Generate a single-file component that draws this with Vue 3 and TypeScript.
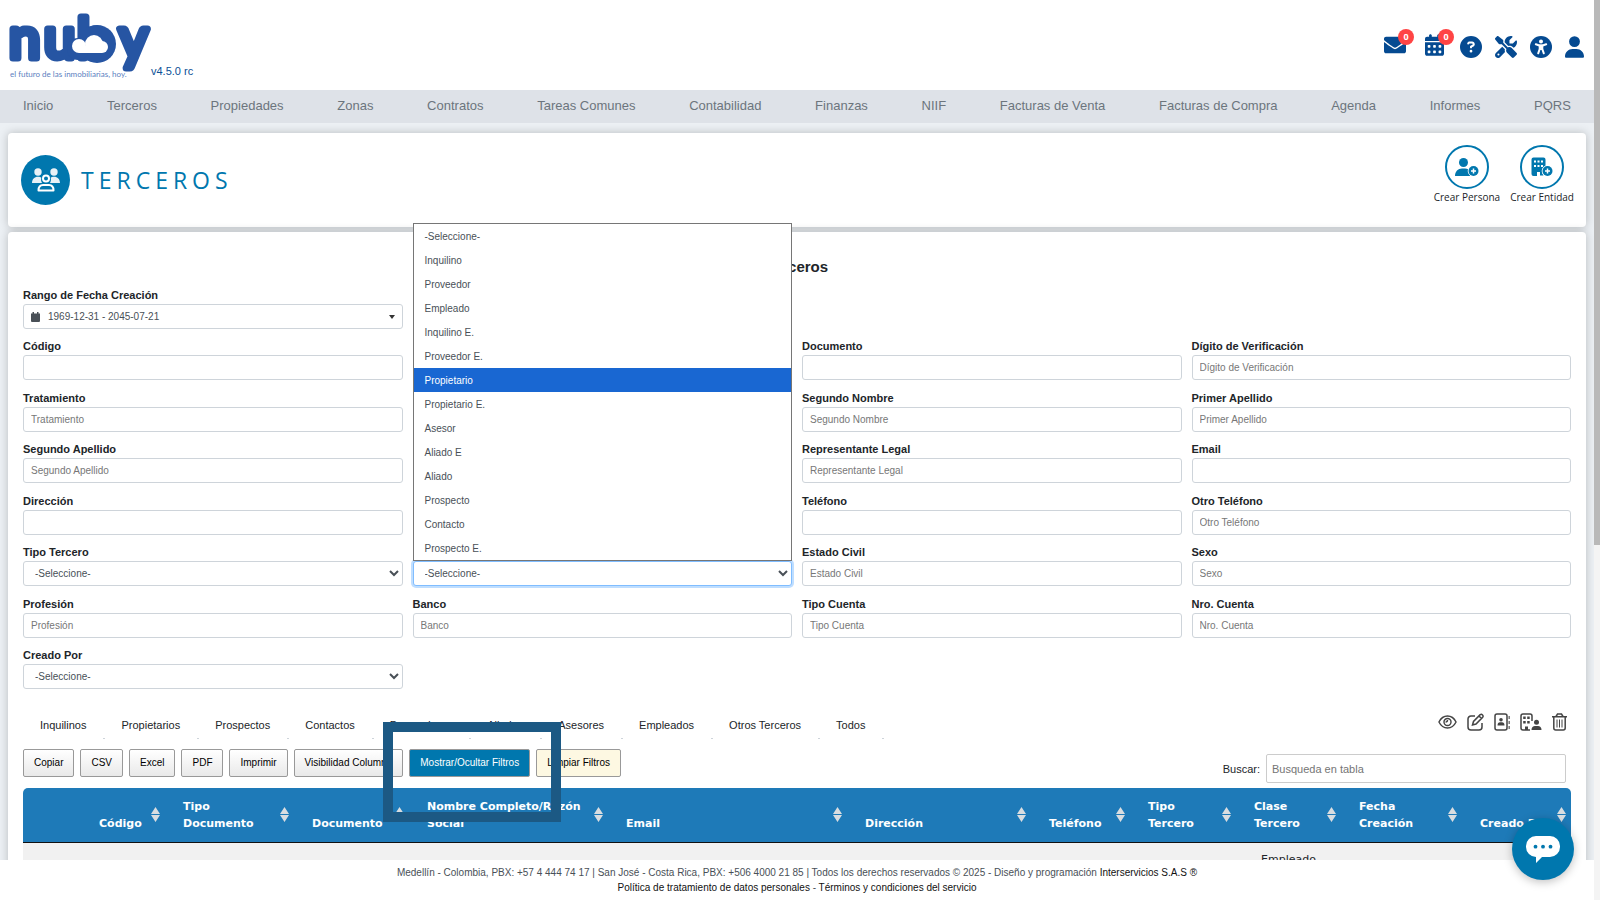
<script setup lang="ts">
interface Field {
  id: string
  label: string
  kind: 'text' | 'select' | 'range' | 'open'
  placeholder?: string
}

interface Column {
  key: string
  lines: string[]
  width?: number
}

const menu: string[] = [
  'Inicio', 'Terceros', 'Propiedades', 'Zonas', 'Contratos', 'Tareas Comunes', 'Contabilidad',
  'Finanzas', 'NIIF', 'Facturas de Venta', 'Facturas de Compra', 'Agenda', 'Informes', 'PQRS',
]

const text = (id: string, label: string, placeholder = label): Field => ({ id, label, kind: 'text', placeholder })
const select = (id: string, label: string): Field => ({ id, label, kind: 'select' })

const rows: (Field | null)[][] = [
  [{ id: 'rango', label: 'Rango de Fecha Creación', kind: 'range' }],
  [text('codigo', 'Código', ''), null, text('documento', 'Documento', ''), text('dv', 'Dígito de Verificación')],
  [text('tratamiento', 'Tratamiento'), null, text('nombre2', 'Segundo Nombre'), text('apellido1', 'Primer Apellido')],
  [text('apellido2', 'Segundo Apellido'), null, text('representante', 'Representante Legal'), text('email', 'Email', '')],
  [text('direccion', 'Dirección', ''), null, text('telefono', 'Teléfono', ''), text('telefono2', 'Otro Teléfono')],
  [select('tipo', 'Tipo Tercero'), { id: 'clase', label: 'Clase Tercero', kind: 'open' }, text('estado', 'Estado Civil'), text('sexo', 'Sexo')],
  [text('profesion', 'Profesión'), text('banco', 'Banco'), text('cuenta', 'Tipo Cuenta'), text('nrocuenta', 'Nro. Cuenta')],
  [select('creado', 'Creado Por')],
]

const options: string[] = [
  '-Seleccione-', 'Inquilino', 'Proveedor', 'Empleado', 'Inquilino E.', 'Proveedor E.', 'Propietario',
  'Propietario E.', 'Asesor', 'Aliado E', 'Aliado', 'Prospecto', 'Contacto', 'Prospecto E.',
]
const active = 'Propietario'

const tabs: string[] = [
  'Inquilinos', 'Propietarios', 'Prospectos', 'Contactos', 'Proveedores', 'Aliados', 'Asesores',
  'Empleados', 'Otros Terceros', 'Todos',
]

const exportsList: string[] = ['Copiar', 'CSV', 'Excel', 'PDF', 'Imprimir', 'Visibilidad Columna']

const columns: Column[] = [
  { key: 'codigo', lines: ['Código'], width: 84 },
  { key: 'tipodoc', lines: ['Tipo', 'Documento'], width: 129 },
  { key: 'doc', lines: ['Documento'], width: 115 },
  { key: 'nombre', lines: ['Nombre Completo/Razón', 'Social'], width: 199 },
  { key: 'email', lines: ['Email'] },
  { key: 'dir', lines: ['Dirección'], width: 184 },
  { key: 'tel', lines: ['Teléfono'], width: 99 },
  { key: 'tipo', lines: ['Tipo', 'Tercero'], width: 106 },
  { key: 'clase', lines: ['Clase', 'Tercero'], width: 105 },
  { key: 'fecha', lines: ['Fecha', 'Creación'], width: 121 },
  { key: 'creado', lines: ['Creado Por'], width: 109 },
]
</script>

<template>
  <div class="screen">
    <div class="page">
      <header class="top">
        <a class="brand" href="#" aria-label="nuby">
          <svg class="logo" width="146" height="84" viewBox="0 0 146 84">
            <text class="word" x="2 37 70 112" y="58">nuby</text>
            <g fill="#2655a3">
              <circle cx="90" cy="44" r="19" />
              <circle cx="71" cy="49" r="11" />
            </g>
            <g class="cloud">
              <circle cx="72" cy="46" r="7" />
              <circle cx="87" cy="44" r="9" />
              <circle cx="95" cy="47" r="6" />
              <rect x="72" y="46" width="23" height="7" />
            </g>
            <text class="tag" x="3" y="77">el futuro de las inmobiliarias, hoy.</text>
          </svg>
          <span class="version">v4.5.0 rc</span>
        </a>
        <div class="tools">
          <button class="tool mail" aria-label="Correo">
            <svg width="22" height="22" viewBox="0 0 512 512"><path d="M502.300 190.800c3.900-3.100 9.700-.2 9.700 4.700V400c0 26.500-21.500 48-48 48H48c-26.500 0-48-21.500-48-48V195.600c0-5 5.700-7.800 9.700-4.700 22.400 17.400 52.100 39.500 154.100 113.600 21.100 15.400 56.700 47.800 92.200 47.600 35.700.3 72-32.800 92.300-47.600 102-74.100 131.600-96.300 154-113.700zM256 320c23.200.4 56.600-29.200 73.400-41.400 132.700-96.300 142.800-104.700 173.400-128.700 5.800-4.500 9.200-11.500 9.200-18.900v-19c0-26.500-21.500-48-48-48H48c-26.500 0-48 21.500-48 48v19c0 7.400 3.400 14.300 9.200 18.900 30.600 23.900 40.700 32.400 173.400 128.700 16.800 12.200 50.200 41.800 73.400 41.400z" /></svg>
            <span class="badge">0</span>
          </button>
          <button class="tool cal" aria-label="Calendario">
            <svg width="19" height="22" viewBox="0 0 448 512"><path d="M128 0c17.700 0 32 14.300 32 32V64H288V32c0-17.700 14.300-32 32-32s32 14.300 32 32V64h48c26.500 0 48 21.500 48 48v48H0V112C0 85.500 21.500 64 48 64H96V32c0-17.700 14.300-32 32-32zM0 192H448V464c0 26.500-21.500 48-48 48H48c-26.500 0-48-21.500-48-48V192zm64 80v32c0 8.800 7.200 16 16 16h32c8.800 0 16-7.200 16-16V272c0-8.800-7.200-16-16-16H80c-8.800 0-16 7.200-16 16zm128 0v32c0 8.800 7.200 16 16 16h32c8.800 0 16-7.200 16-16V272c0-8.800-7.200-16-16-16H208c-8.800 0-16 7.200-16 16zm144-16c-8.800 0-16 7.200-16 16v32c0 8.800 7.200 16 16 16h32c8.800 0 16-7.200 16-16V272c0-8.800-7.200-16-16-16H336zM64 400v32c0 8.800 7.200 16 16 16h32c8.800 0 16-7.200 16-16V400c0-8.800-7.200-16-16-16H80c-8.800 0-16 7.200-16 16zm144-16c-8.800 0-16 7.200-16 16v32c0 8.800 7.200 16 16 16h32c8.800 0 16-7.200 16-16V400c0-8.800-7.200-16-16-16H208zm112 16v32c0 8.800 7.200 16 16 16h32c8.800 0 16-7.200 16-16V400c0-8.800-7.200-16-16-16H336c-8.800 0-16 7.200-16 16z" /></svg>
            <span class="badge">0</span>
          </button>
          <button class="tool" aria-label="Ayuda">
            <svg width="22" height="22" viewBox="0 0 512 512"><path d="M256 512A256 256 0 1 0 256 0a256 256 0 1 0 0 512zM169.800 165.300c7.900-22.300 29.100-37.300 52.800-37.300h58.300c34.900 0 63.100 28.300 63.100 63.100c0 22.600-12.100 43.500-31.700 54.800L280 264.400c-.2 13-10.900 23.600-24 23.600c-13.300 0-24-10.700-24-24V250.500c0-8.600 4.600-16.500 12.100-20.800l44.300-25.400c4.700-2.700 7.600-7.700 7.600-13.100c0-8.400-6.800-15.100-15.100-15.100H222.600c-3.400 0-6.400 2.100-7.500 5.300l-.4 1.200c-4.400 12.500-18.200 19-30.600 14.600s-19-18.200-14.600-30.600l.4-1.200zM224 352a32 32 0 1 1 64 0 32 32 0 1 1-64 0z" /></svg>
          </button>
          <button class="tool" aria-label="Configuración">
            <svg width="22" height="22" viewBox="0 0 512 512"><path d="M78.600 5C69.100-2.400 55.600-1.500 47 7L7 47c-8.500 8.500-9.400 22-2.100 31.600l80 104c4.500 5.900 11.600 9.400 19 9.400h54.100l109 109c-14.700 29-10 65.400 14.300 89.600l112 112c12.500 12.500 32.800 12.500 45.300 0l64-64c12.500-12.500 12.500-32.800 0-45.300l-112-112c-24.200-24.200-60.600-29-89.600-14.300l-109-109V104c0-7.500-3.500-14.500-9.400-19L78.600 5zM19.900 396.100C7.200 408.800 0 426.100 0 444.100C0 481.600 30.400 512 67.900 512c18 0 35.300-7.200 48-19.900L233.700 374.300c-7.800-20.900-9-43.600-3.600-65.100l-61.700-61.700L19.900 396.100zM512 144c0-10.500-1.100-20.700-3.200-30.500c-2.400-11.200-16.100-14.100-24.200-6l-63.900 63.900c-3 3-7.100 4.700-11.300 4.700H352c-8.800 0-16-7.200-16-16V102.600c0-4.200 1.700-8.300 4.700-11.300l63.900-63.900c8.100-8.100 5.200-21.800-6-24.200C388.700 1.100 378.500 0 368 0C288.500 0 224 64.500 224 144l0 .8 85.300 85.300c36-9.100 75.800 .5 104 28.700L429 274.500c49-23 83-72.800 83-130.500zM56 432a24 24 0 1 1 48 0 24 24 0 1 1-48 0z" /></svg>
          </button>
          <button class="tool" aria-label="Accesibilidad">
            <svg width="22" height="22" viewBox="0 0 22 22"><circle cx="11" cy="11" r="11" /><g fill="#fff" stroke="#fff" stroke-width="2" stroke-linecap="round" stroke-linejoin="round"><circle cx="11" cy="5.500" r="1" /><path d="M5.800 8.300l3.600 1.200h3.200l3.600-1.200" fill="none" /><path d="M9.700 9.500v3.500l-1.500 4.300M12.300 9.500v3.500l1.500 4.300M11 9.500v3.500" fill="none" /></g></svg>
          </button>
          <button class="tool" aria-label="Usuario">
            <svg width="19" height="22" viewBox="0 0 448 512"><path d="M224 256A128 128 0 1 0 224 0a128 128 0 1 0 0 256zm-45.700 48C79.800 304 0 383.800 0 482.300C0 498.700 13.300 512 29.700 512H418.300c16.400 0 29.700-13.300 29.700-29.700C448 383.800 368.200 304 269.700 304H178.300z" /></svg>
          </button>
        </div>
      </header>

      <nav class="menu">
        <a v-for="item in menu" :key="item" href="#">{{ item }}</a>
      </nav>

      <main class="main">
        <section class="card heading">
          <div class="title">
            <svg width="49" height="50" viewBox="0 0 49 50">
              <ellipse cx="24.500" cy="25" rx="24.500" ry="25" fill="#0077ae" />
              <g fill="#e8f1f6">
                <circle cx="17" cy="17" r="3.700" /><circle cx="33" cy="17" r="3.700" />
                <path d="M11 28c0-4 2.500-6.300 6-6.300 1.500 0 2.500.3 3.300 1-.5 2-.2 3.700.7 5.300z" />
                <path d="M39 28c0-4-2.500-6.300-6-6.300-1.500 0-2.500.3-3.300 1 .5 2 .2 3.700-.7 5.300z" />
              </g>
              <circle cx="25" cy="23.500" r="3" fill="none" stroke="#fff" stroke-width="2" />
              <path d="M17.500 35.500c0-4 2-5.500 4.500-5.500h6c2.500 0 4.500 1.500 4.500 5.500z" fill="none" stroke="#fff" stroke-width="2" stroke-linejoin="round" />
            </svg>
            <h1>TERCEROS</h1>
          </div>
          <div class="creates">
            <button class="create">
              <span class="ring">
                <svg width="24" height="20" viewBox="0 0 24 20"><circle cx="8.500" cy="5.500" r="4.500" /><path d="M0 19c0-4.500 3-7.500 7-7.500h3c2.500 0 4 1 5 2.500a6 6 0 0 0 .5 5z" /><circle cx="18.500" cy="14" r="5.800" fill="#fff" /><circle cx="18.500" cy="14" r="5" /><path d="M18.500 11.500v5M16 14h5" stroke="#fff" stroke-width="1.500" /></svg>
              </span>
              <span>Crear Persona</span>
            </button>
            <button class="create">
              <span class="ring">
                <svg width="24" height="20" viewBox="0 0 24 20"><path d="M1.500 2.500A2 2 0 0 1 3.500.5h10a2 2 0 0 1 2 2V9a6 6 0 0 0-2 9.500H10V15H7v4H3.500a2 2 0 0 1-2-2z" /><path d="M4 3.500h2v2H4zM7.500 3.500h2v2h-2zM11 3.500h2v2h-2zM4 8h2v2H4zM7.500 8h2v2h-2zM11 8h2v2h-2z" fill="#fff" /><circle cx="17.500" cy="14" r="5.800" fill="#fff" /><circle cx="17.500" cy="14" r="5" /><path d="M17.500 11.500v5M15 14h5" stroke="#fff" stroke-width="1.500" /></svg>
              </span>
              <span>Crear Entidad</span>
            </button>
          </div>
        </section>

        <section class="card content">
          <h2>Terceros</h2>

          <form class="filters" @submit.prevent>
            <div v-for="(row, r) in rows" :key="r" class="row">
              <div v-for="(f, c) in row" :key="c" class="field">
                <template v-if="f && f.kind === 'open'">
                  <div class="combo">
                    <select :id="f.id" class="control focus" :aria-label="f.label">
                      <option>-Seleccione-</option>
                    </select>
                    <ul class="list" role="listbox" :aria-label="f.label">
                      <li v-for="o in options" :key="o" role="option" :aria-selected="o === active" :class="{ on: o === active }">{{ o }}</li>
                    </ul>
                  </div>
                </template>
                <template v-else-if="f">
                  <label :for="f.id">{{ f.label }}</label>
                  <button v-if="f.kind === 'range'" :id="f.id" type="button" class="control range">
                    <svg width="9" height="10" viewBox="0 0 9 10"><path d="M1.500 0h1.500v1.500h3V0h1.500v1.500H9v1.500H0V1.500h1.500zM0 3h9V9a1 1 0 0 1-1 1H1a1 1 0 0 1-1-1z" /></svg>
                    <span>1969-12-31 - 2045-07-21</span>
                    <i class="caret"></i>
                  </button>
                  <select v-else-if="f.kind === 'select'" :id="f.id" class="control">
                    <option>-Seleccione-</option>
                  </select>
                  <input v-else :id="f.id" type="text" class="control" :placeholder="f.placeholder" />
                </template>
              </div>
            </div>
          </form>

          <div class="tabbar">
            <div class="tabs" role="tablist">
              <button v-for="t in tabs" :key="t" role="tab" class="tab">{{ t }}</button>
            </div>
            <div class="actions">
              <button aria-label="Ver"><svg width="19" height="18" viewBox="0 0 20 18" fill="none" stroke="#444" stroke-width="1.500"><path d="M1 9c2-4 5-6.300 9-6.300S17 5 19 9c-2 4-5 6.300-9 6.300S3 13 1 9z" /><circle cx="10" cy="9" r="3.700" /><path d="M10 7a2 2 0 0 1-2 2" /></svg></button>
              <button aria-label="Editar"><svg width="17" height="18" viewBox="0 0 17 18" fill="none" stroke="#444" stroke-width="1.500"><path d="M8 3H4a3 3 0 0 0-3 3v8a3 3 0 0 0 3 3h8a3 3 0 0 0 3-3v-4" /><path d="M13.200 1.700a1.800 1.800 0 0 1 2.500 2.500L9 11l-3.500 1 1-3.500zM12 3l2.500 2.500" /></svg></button>
              <button aria-label="Contacto"><svg width="16" height="18" viewBox="0 0 16 18"><rect x="1" y="1" width="12" height="16" rx="2" fill="none" stroke="#444" stroke-width="1.500" /><circle cx="7" cy="6.700" r="1.800" fill="#444" /><path d="M3.500 12.500c0-2 1-3.200 2.500-3.200h2c1.500 0 2.500 1.200 2.500 3.200z" fill="#444" /><path d="M15.200 3v3M15.200 8v3M15.200 13v3" stroke="#777" stroke-width="1.500" /></svg></button>
              <button aria-label="Entidad"><svg width="22" height="18" viewBox="0 0 22 18"><path d="M10 17H3a2 2 0 0 1-2-2V3a2 2 0 0 1 2-2h7a2 2 0 0 1 2 2v5" fill="none" stroke="#444" stroke-width="1.500" /><path d="M3.200 3.500h2.500V6H3.200zM7.200 3.500h2.500V6H7.200zM3.200 8h2.500v2.500H3.200zM7.200 8h2.500v2.500H7.200zM5 17v-3.500h3V17z" fill="#444" /><circle cx="16.500" cy="9.300" r="2.500" fill="#444" /><path d="M11.500 17c0-2.700 1.500-4 3.500-4h3c2 0 3.500 1.300 3.500 4z" fill="#444" /></svg></button>
              <button aria-label="Eliminar"><svg width="15" height="18" viewBox="0 0 15 18" fill="none" stroke="#444" stroke-width="1.500"><path d="M0 3.700h15M4 3.500L5.500 1h4L11 3.500M1.800 4v11a2 2 0 0 0 2 2h7.400a2 2 0 0 0 2-2V4" /><path d="M5 6.500v8M7.500 6.500v8M10 6.500v8" stroke-width="1" /></svg></button>
            </div>
          </div>

          <div class="toolbar">
            <div class="buttons">
              <button v-for="b in exportsList" :key="b" class="btn">{{ b }}</button>
              <div class="marked">
                <button class="btn primary">Mostrar/Ocultar Filtros</button>
                <div class="frame"></div>
              </div>
              <button class="btn cream">Limpiar Filtros</button>
            </div>
            <div class="search">
              <label for="buscar">Buscar:</label>
              <input id="buscar" type="search" placeholder="Busqueda en tabla" />
            </div>
          </div>

          <table class="grid">
            <colgroup>
              <col class="pick" />
              <col v-for="c in columns" :key="c.key" :style="c.width ? { width: c.width + 'px' } : {}" />
            </colgroup>
            <thead>
              <tr>
                <th></th>
                <th v-for="c in columns" :key="c.key" scope="col">
                  <div v-for="l in c.lines" :key="l">{{ l }}</div>
                  <svg class="sort" width="9" height="15" viewBox="0 0 9 15"><path d="M4.500 0L9 7H0zM4.500 15L9 8H0z" fill="#d9dde0" /></svg>
                </th>
              </tr>
            </thead>
            <tbody>
              <tr>
                <td colspan="9"></td>
                <td>Empleado</td>
                <td colspan="2"></td>
              </tr>
            </tbody>
          </table>
        </section>
      </main>

      <footer class="foot">
        <p>Medellín - Colombia, PBX: +57 4 444 74 17 | San José - Costa Rica, PBX: +506 4000 21 85 | Todos los derechos reservados © 2025 - Diseño y programación <a href="#">Interservicios S.A.S ®</a></p>
        <p><a href="#">Política de tratamiento de datos personales</a> - <a href="#">Términos y condiciones del servicio</a></p>
      </footer>
    </div>

    <div class="scroll"><div class="thumb"></div></div>

    <button class="chat" aria-label="Chat">
      <svg width="34" height="27" viewBox="0 0 34 27"><path d="M10 0h14a10 10 0 0 1 10 10v1a10 10 0 0 1-10 10h-8l-6 6v-6A10 10 0 0 1 0 11v-1A10 10 0 0 1 10 0z" fill="#fff" /><g fill="#0077ae"><circle cx="9.500" cy="10.700" r="1.900" /><circle cx="17" cy="10.700" r="1.900" /><circle cx="24.500" cy="10.700" r="1.900" /></g></svg>
    </button>
  </div>
</template>

<style>
body {
  margin: 0;
}
</style>

<style scoped>
.screen {
  position: relative;
  display: flex;
  height: 100vh;
  overflow: hidden;
  background: #ecf0f4;
  color: #212529;
  font-family: Arial, "Liberation Sans", sans-serif;
  font-size: 11px;
}
.screen * {
  box-sizing: border-box;
}
button,
input,
select {
  font-family: inherit;
}
button {
  border: 0;
  padding: 0;
  background: none;
  cursor: pointer;
}
svg {
  display: block;
}
a {
  color: inherit;
  text-decoration: none;
}
.page {
  flex: 1;
  min-width: 0;
  display: flex;
  flex-direction: column;
}

.top {
  display: flex;
  justify-content: space-between;
  height: 90px;
  flex: none;
  padding: 0 10px 0 7px;
  background: #fff;
}
.brand {
  display: flex;
  align-items: flex-start;
  color: #0a4f96;
}
.logo {
  overflow: visible;
}
.word {
  font: 400 56px Lato, sans-serif;
  fill: #2655a3;
  stroke: #2655a3;
  stroke-width: 7px;
  stroke-linejoin: round;
}
.cloud {
  fill: #fff;
}
.tag {
  font: 400 8px Lato, sans-serif;
  fill: #5b80c0;
}
.version {
  margin: 64px 0 0 -2px;
  font-size: 11px;
  line-height: 14px;
}
.tools {
  display: flex;
  align-items: flex-start;
  gap: 13px;
  padding-top: 36px;
}
.tool {
  position: relative;
}
.tool svg {
  fill: #054a91;
}
.tool.mail {
  margin: -2px 6px 0 0;
}
.tool.cal {
  margin: -2px 3px 0 0;
}
.badge {
  position: absolute;
  right: -8px;
  top: -5px;
  width: 16px;
  height: 16px;
  border-radius: 50%;
  background: #ff4444;
  color: #fff;
  font: bold 9px/16px "Open Sans", sans-serif;
  text-align: center;
}
.cal .badge {
  right: -10px;
}

.menu {
  display: flex;
  justify-content: space-between;
  flex: none;
  height: 33px;
  padding: 0 23px;
  background: #dee2e8;
  color: #6c757d;
  font-size: 13px;
  line-height: 31px;
}

.main {
  flex: 1;
  min-height: 0;
  overflow: hidden;
  display: flex;
  flex-direction: column;
  gap: 5px;
  padding: 10px 8px 0;
}
.card {
  flex: none;
  border-radius: 4px;
  background: #fff;
  box-shadow: 0 0 10px rgba(0, 0, 0, 0.22);
}
.heading {
  display: flex;
  justify-content: space-between;
  height: 94px;
  padding: 12px 12px 0 13px;
}
.title {
  display: flex;
  align-items: center;
  gap: 11px;
  height: 70px;
}
h1 {
  margin: 0;
  color: #0077ae;
  font: 400 23px/32px "Open Sans", sans-serif;
  letter-spacing: 5px;
}
.creates {
  display: flex;
  gap: 10px;
}
.create {
  display: flex;
  flex-direction: column;
  align-items: center;
  height: 60px;
  color: #212529;
  font: 400 10px/16px "Open Sans", sans-serif;
}
.ring {
  display: grid;
  place-items: center;
  width: 44px;
  height: 44px;
  border: 2px solid #0077ae;
  border-radius: 50%;
}
.ring svg {
  fill: #0077ae;
}

.content {
  padding: 24px 15px 0;
}
h2 {
  margin: 0 0 9px;
  font-size: 15px;
  line-height: 22px;
  text-align: center;
}
.filters {
  display: flex;
  flex-direction: column;
  justify-content: space-between;
  min-height: 402px;
}
.row {
  display: grid;
  grid-template-columns: repeat(4, 1fr);
  gap: 10px;
}
.field {
  display: flex;
  flex-direction: column;
  justify-content: flex-end;
  min-width: 0;
}
.field label {
  font-weight: 700;
  font-size: 11px;
  line-height: 17px;
}
.control {
  width: 100%;
  height: 25px;
  padding: 0 7px;
  border: 1px solid #ced4da;
  border-radius: 3px;
  background: #fff;
  color: #495057;
  font-size: 10px;
  outline: 0;
}
.control::placeholder {
  color: #777;
  opacity: 1;
}
.range {
  display: flex;
  align-items: center;
  gap: 8px;
}
.range svg {
  fill: #495057;
}
.caret {
  margin-left: auto;
  border: 3px solid transparent;
  border-top: 4px solid #333;
  border-bottom: 0;
}
.focus {
  border-color: #80bdff;
  box-shadow: 0 0 0 2px rgba(0, 123, 255, 0.25);
}
.combo {
  position: relative;
}
.list {
  position: absolute;
  left: 0;
  right: 0;
  bottom: 100%;
  z-index: 5;
  margin: 0;
  padding: 0;
  border: 1px solid #767676;
  background: #fff;
  color: #495057;
  list-style: none;
  font-size: 10px;
  line-height: 26px;
}
.list li {
  height: 24px;
  padding-left: 11px;
}
.list .on {
  background: #1967d2;
  color: #fff;
}

.tabbar {
  display: flex;
  justify-content: space-between;
  align-items: flex-start;
  margin-top: 20px;
}
.tabs {
  display: flex;
}
.tab {
  position: relative;
  height: 32px;
  padding: 0 18px 0 17px;
  color: #212529;
  font-size: 11px;
  line-height: 32px;
}
.tab::after {
  content: "";
  position: absolute;
  right: -1px;
  bottom: 2px;
  width: 2px;
  height: 1px;
  background: #ced4da;
}
.actions {
  display: flex;
  gap: 10px;
  padding: 4px 4px 0 0;
}
.toolbar {
  display: flex;
  justify-content: space-between;
  align-items: flex-start;
  margin: 8px 0 5px;
}
.buttons {
  display: flex;
  gap: 6px;
}
.btn {
  height: 28px;
  padding: 0 10px 1px;
  border: 1px solid #999;
  border-radius: 2px;
  background: linear-gradient(#fff, #e9e9e9);
  color: #000;
  font-size: 10px;
}
.btn.primary {
  background: #0077ae;
  color: #fff;
}
.btn.cream {
  background: #fdf8e2;
}
.marked {
  position: relative;
}
.frame {
  position: absolute;
  left: -26px;
  top: -27px;
  z-index: 4;
  width: 178px;
  height: 100px;
  border: 10px solid #1c5984;
  pointer-events: none;
}
.search {
  display: flex;
  align-items: center;
  gap: 6px;
  padding: 5px 5px 0 0;
}
.search input {
  width: 300px;
  height: 29px;
  padding: 0 5px;
  border: 1px solid #ccc;
  border-radius: 2px;
  font-size: 11px;
  outline: 0;
}

.grid {
  width: 100%;
  table-layout: fixed;
  border-collapse: separate;
  border-spacing: 0;
  font-family: Verdana, "DejaVu Sans", sans-serif;
}
.pick {
  width: 58px;
}
.grid th {
  position: relative;
  height: 55px;
  padding: 10px 0 10px 18px;
  border-bottom: 1px solid #111;
  background: #1e7ab8;
  color: #fff;
  font-size: 11px;
  line-height: 17px;
  text-align: left;
  vertical-align: bottom;
  white-space: nowrap;
}
.grid th:first-child {
  border-top-left-radius: 5px;
}
.grid th:last-child {
  border-top-right-radius: 5px;
}
.sort {
  position: absolute;
  right: 5px;
  top: 19px;
}
.grid td {
  height: 40px;
  padding: 8px 0;
  background: #f1f1f1;
  font-size: 11px;
  line-height: 17px;
  text-align: center;
  vertical-align: top;
}

.foot {
  flex: none;
  position: relative;
  z-index: 6;
  height: 40px;
  padding-top: 5px;
  background: #fff;
  color: #495057;
  font-size: 10px;
  line-height: 15px;
  text-align: center;
}
.foot p {
  margin: 0;
}
.foot a {
  color: #111;
}

.scroll {
  flex: none;
  width: 6px;
  background: #f4f4f4;
}
.thumb {
  height: 545px;
  background: #b9b9b9;
}
.chat {
  position: absolute;
  right: 26px;
  bottom: 20px;
  z-index: 7;
  display: grid;
  place-items: center;
  width: 62px;
  height: 62px;
  border-radius: 50%;
  background: #0077ae;
  box-shadow: 0 2px 10px rgba(0, 0, 0, 0.25);
}
</style>
